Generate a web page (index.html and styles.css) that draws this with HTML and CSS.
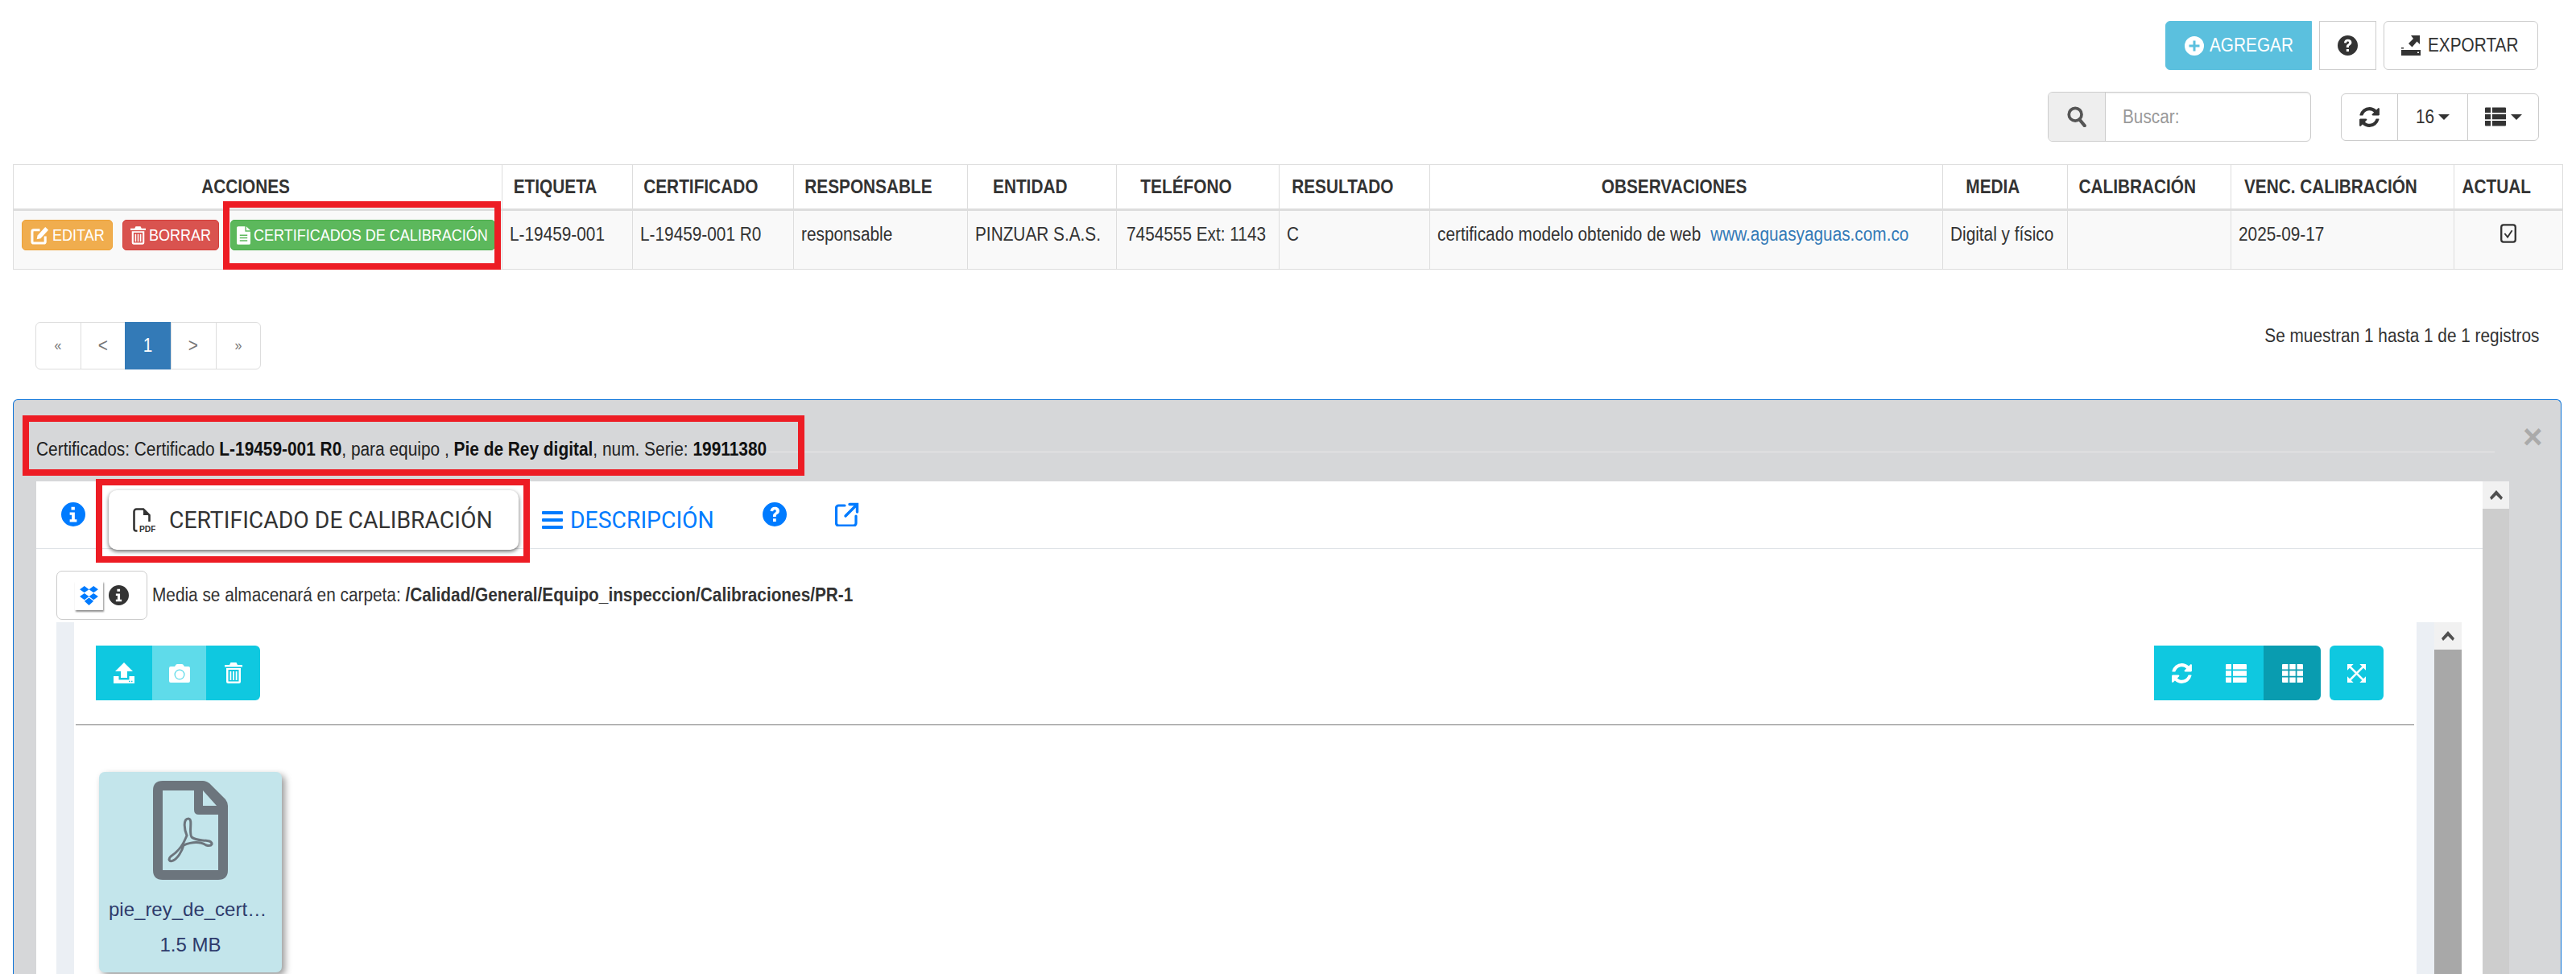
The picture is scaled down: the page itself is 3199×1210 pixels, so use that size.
FILE: index.html
```html
<!DOCTYPE html>
<html lang="es">
<head>
<meta charset="utf-8">
<title>Certificados de calibración</title>
<link rel="stylesheet" href="styles.css">
</head>
<body>
<svg class="defs" width="0" height="0" aria-hidden="true">
  <symbol id="i-refresh" viewBox="0 0 1792 1792"><path d="M1639 1056q0 5-1 7-64 268-268 434.5t-478 166.5q-146 0-282.5-55t-243.5-157l-129 129q-19 19-45 19t-45-19-19-45v-448q0-26 19-45t45-19h448q26 0 45 19t19 45-19 45l-137 137q71 66 161 102t187 36q134 0 250-65t186-179q11-17 53-117 8-23 30-23h192q13 0 22.5 9.5t9.5 22.5zm25-800v448q0 26-19 45t-45 19h-448q-26 0-45-19t-19-45 19-45l138-138q-148-137-349-137-134 0-250 65t-186 179q-11 17-53 117-8 23-30 23h-199q-13 0-22.5-9.5t-9.5-22.5v-7q65-268 270-434.5t480-166.5q146 0 284 55.5t245 156.5l130-129q19-19 45-19t45 19 19 45z"/></symbol>
  <symbol id="i-question" viewBox="0 0 24 24"><path fill-rule="evenodd" d="M12 0a12 12 0 1 0 0 24a12 12 0 0 0 0-24zM7.600 8.800C7.900 6 9.700 4.600 12.200 4.600c2.500 0 4.500 1.500 4.500 3.900 0 1.700-.9 2.600-2 3.300-1 .6-1.300 1-1.300 1.900v.6h-3v-.9c0-1.600.7-2.400 1.800-3.100.9-.6 1.300-1 1.300-1.700 0-.8-.6-1.300-1.400-1.300-.9 0-1.500.6-1.600 1.700zM10.400 16.200h3v3h-3z"/></symbol>
  <symbol id="i-info" viewBox="0 0 24 24"><path fill-rule="evenodd" d="M12 0a12 12 0 1 0 0 24a12 12 0 0 0 0-24zM10 4.500h3.500v3H10zM8.500 10h5v7h2v2.500h-7V17h2v-4.500h-2z"/></symbol>
  <symbol id="i-list" viewBox="0 0 26 23"><path d="M0 1a1 1 0 0 1 1-1h6v6.500H0zM9 0h16a1 1 0 0 1 1 1v5.500H9zM0 8.200h7v6.600H0zM9 8.200h17v6.600H9zM0 16.500h7V23H1a1 1 0 0 1-1-1zM9 16.500h17V22a1 1 0 0 1-1 1H9z"/></symbol>
  <symbol id="i-trash" viewBox="0 0 22 26"><path fill-rule="evenodd" d="M7.500 0h7l1.500 3h6v2.500H0V3h6zM2 7h18v16.500a2.500 2.500 0 0 1-2.500 2.500h-13A2.500 2.500 0 0 1 2 23.500zM4.500 9v14.500h13V9zM6.500 11h1.800v11H6.500zM10.100 11h1.800v11h-1.800zM13.700 11h1.800v11h-1.800z"/></symbol>
</svg>

<div class="toolbar-main">
  <button class="btn btn-info" type="button">
    <svg class="ic-24" viewBox="0 0 24 24"><path fill-rule="evenodd" d="M12 0a12 12 0 1 0 0 24a12 12 0 0 0 0-24zM10.500 5.500h3V10.500h5v3h-5v5h-3v-5h-5v-3h5z"/></svg>
    <span class="sq">AGREGAR</span>
  </button>
  <button class="btn btn-square" type="button"><svg class="ic-25"><use href="#i-question"/></svg></button>
  <button class="btn btn-default" type="button">
    <svg class="ic-export" viewBox="0 0 24 25"><path fill-rule="evenodd" d="M0 18h24v7H0zM20 20.500v1.500h2v-1.500zM0 15h3v1.500H0z"/><path d="M12 0h11v11l-3.500-3.500-6 7-4.500-4.500 6-6z"/></svg>
    <span class="sq">EXPORTAR</span>
  </button>
</div>

<div class="toolbar-search">
  <div class="search-group">
    <span class="search-addon">
      <svg class="ic-search" viewBox="0 0 26 28"><circle cx="11" cy="11" r="8.500" fill="none" stroke="#555" stroke-width="4"/><path d="M16.500 17.500l7 8.500" stroke="#555" stroke-width="4.500" stroke-linecap="round"/></svg>
    </span>
    <span class="search-input"><span class="sq">Buscar:</span></span>
  </div>
  <div class="tool-group">
    <span class="tool-cell tool-refresh"><svg class="ic-refresh-dark"><use href="#i-refresh"/></svg></span>
    <span class="tool-cell tool-size"><span class="sq">16</span><i class="caret"></i></span>
    <span class="tool-cell tool-view"><svg class="ic-list-dark"><use href="#i-list"/></svg><i class="caret"></i></span>
  </div>
</div>

<table class="data-table">
  <colgroup>
    <col class="c-acciones"><col class="c-etiqueta"><col class="c-certificado"><col class="c-responsable">
    <col class="c-entidad"><col class="c-telefono"><col class="c-resultado"><col class="c-observaciones">
    <col class="c-media"><col class="c-calibracion"><col class="c-venc"><col class="c-actual">
  </colgroup>
  <thead>
    <tr>
      <th><span class="sq-c">ACCIONES</span></th><th><span class="sq-c">ETIQUETA</span></th><th><span class="sq-c">CERTIFICADO</span></th><th><span class="sq-c">RESPONSABLE</span></th><th><span class="sq-c">ENTIDAD</span></th><th><span class="sq-c">TELÉFONO</span></th>
      <th><span class="sq-c">RESULTADO</span></th><th><span class="sq-c">OBSERVACIONES</span></th><th><span class="sq-c">MEDIA</span></th><th><span class="sq-c">CALIBRACIÓN</span></th><th><span class="sq-c">VENC. CALIBRACIÓN</span></th><th><span class="sq-c">ACTUAL</span></th>
    </tr>
  </thead>
  <tbody>
    <tr>
      <td class="cell-actions">
        <span class="act act-warning">
          <svg class="ic-edit" viewBox="0 0 24 24"><path d="M19 13v7a2 2 0 0 1-2 2H4a2 2 0 0 1-2-2V7a2 2 0 0 1 2-2h8" fill="none" stroke="#fff" stroke-width="3.200"/><path d="M9 12L19 1l4 4-10 11-5 1z" fill="#fff"/></svg><span class="sq-btn">EDITAR</span>
        </span>
        <span class="act act-danger"><svg class="ic-trash-sm"><use href="#i-trash"/></svg><span class="sq-btn">BORRAR</span></span>
        <span class="act act-success">
          <svg class="ic-file" viewBox="0 0 18 24"><path fill-rule="evenodd" d="M2 0h9v7h7v15a2 2 0 0 1-2 2H2a2 2 0 0 1-2-2V2a2 2 0 0 1 2-2zM12.500 0L18 5.500h-5.500zM4 11v1.600h10V11zM4 14.500v1.600h10v-1.600zM4 18v1.600h10V18z"/></svg><span class="sq-btn">CERTIFICADOS DE CALIBRACIÓN</span>
        </span>
      </td>
      <td><span class="sq">L-19459-001</span></td>
      <td><span class="sq">L-19459-001 R0</span></td>
      <td><span class="sq">responsable</span></td>
      <td><span class="sq">PINZUAR S.A.S.</span></td>
      <td class="cell-phone"><span class="sq">7454555 Ext: 1143</span></td>
      <td><span class="sq">C</span></td>
      <td><span class="sq">certificado modelo obtenido de web <a class="link" href="#">www.aguasyaguas.com.co</a></span></td>
      <td><span class="sq">Digital y físico</span></td>
      <td></td>
      <td><span class="sq">2025-09-17</span></td>
      <td class="cell-check">
        <svg class="ic-check" viewBox="0 0 22 26"><rect x="1.500" y="1.500" width="19" height="23" rx="3" fill="none" stroke="#333" stroke-width="2.500"/><path d="M6 13l4 5 6-9" fill="none" stroke="#333" stroke-width="2"/></svg>
      </td>
    </tr>
  </tbody>
</table>

<div class="table-footer">
  <ul class="pagination">
    <li class="pg pg-small"><span class="sq-c">«</span></li>
    <li class="pg"><span class="sq-c">&lt;</span></li>
    <li class="pg pg-active"><span class="sq-c">1</span></li>
    <li class="pg"><span class="sq-c">&gt;</span></li>
    <li class="pg pg-small"><span class="sq-c">»</span></li>
  </ul>
  <p class="records">Se muestran 1 hasta 1 de 1 registros</p>
</div>

<section class="panel">
  <header class="panel-head">
    <h2 class="panel-title">Certificados: Certificado <b>L-19459-001 R0</b>, para equipo , <b>Pie de Rey digital</b>, num. Serie: <b>19911380</b></h2>
    <span class="panel-close">×</span>
  </header>
  <div class="panel-body">
    <div class="panel-main">
      <nav class="tabs">
        <svg class="ic-tab ic-tab-info"><use href="#i-info"/></svg>
        <span class="tab tab-active">
          <svg class="ic-pdf-sm" viewBox="0 0 28 30"><path d="M1.500 26V4.500a3 3 0 0 1 3-3H13l7.500 7.500v8" fill="none" stroke="#333" stroke-width="2.600"/><path d="M13 1.500v7.500h7.500z" fill="#333"/><path d="M1.500 26a2.500 2.500 0 0 0 2.500 2.500h1.500" fill="none" stroke="#333" stroke-width="2.600"/><text x="8" y="29.500" class="pdf-label">PDF</text></svg>
          <span class="sq-tab">CERTIFICADO DE CALIBRACIÓN</span>
        </span>
        <span class="tab tab-link">
          <svg class="ic-bars" viewBox="0 0 26 22"><path d="M1 0h24a1 1 0 0 1 1 1v2a1 1 0 0 1-1 1H1a1 1 0 0 1-1-1V1a1 1 0 0 1 1-1zM1 9h24a1 1 0 0 1 1 1v2a1 1 0 0 1-1 1H1a1 1 0 0 1-1-1v-2a1 1 0 0 1 1-1zM1 18h24a1 1 0 0 1 1 1v2a1 1 0 0 1-1 1H1a1 1 0 0 1-1-1v-2a1 1 0 0 1 1-1z"/></svg>
          <span class="sq-tab">DESCRIPCIÓN</span>
        </span>
        <svg class="ic-tab ic-tab-help"><use href="#i-question"/></svg>
        <svg class="ic-tab ic-tab-ext" viewBox="0 0 30 30"><path d="M12 4H4.500a3 3 0 0 0-3 3v19a3 3 0 0 0 3 3H23a3 3 0 0 0 3-3v-9" fill="none" stroke="#007bff" stroke-width="3.200" stroke-linecap="round"/><path d="M13 17L27 3M18 2.500h9.500V12" fill="none" stroke="#007bff" stroke-width="3.400" stroke-linecap="round"/></svg>
      </nav>

      <div class="media-row">
        <span class="media-btn">
          <span class="dropbox-box">
            <svg class="ic-dropbox" viewBox="0 0 24 25"><path d="M6.500 1L12 5 6.500 9 1 5zM17.500 1L23 5l-5.500 4L12 5zM6.500 9.500L12 13.500 6.500 17.500 1 13.500zM17.500 9.500L23 13.500l-5.500 4L12 13.500zM12 15l5.500 4L12 24l-5.500-5z"/></svg>
          </span>
          <svg class="ic-media-info"><use href="#i-info"/></svg>
        </span>
        <span class="media-text sq">Media se almacenará en carpeta: <b>/Calidad/General/Equipo_inspeccion/Calibraciones/PR-1</b></span>
      </div>

      <div class="uploader">
        <div class="track-left"></div>
        <div class="uploader-main">
          <div class="up-tools">
            <div class="up-group">
              <span class="up-btn up-upload"><svg class="ic-up" viewBox="0 0 26 26"><path d="M13 0l11 11h-7v8H9v-8H2z"/><path fill-rule="evenodd" d="M0 17h6.500v4.500h13V17H26v9H0zM19 22.800v1.400h1.500v-1.400zM22 22.800v1.400h1.500v-1.400z"/></svg></span>
              <span class="up-btn up-camera"><svg class="ic-cam" viewBox="0 0 26 23"><path fill-rule="evenodd" d="M8 1.500Q8.500 0 10 0h6q1.500 0 2 1.500L19 3h5a2 2 0 0 1 2 2v16a2 2 0 0 1-2 2H2a2 2 0 0 1-2-2V5a2 2 0 0 1 2-2h5zM13 6.500a6.500 6.500 0 1 0 0 13a6.500 6.500 0 0 0 0-13zM13 7.800a5.200 5.200 0 1 1 0 10.400a5.200 5.200 0 0 1 0-10.400z"/></svg></span>
              <span class="up-btn up-trash"><svg class="ic-trash-lg"><use href="#i-trash"/></svg></span>
            </div>
            <div class="up-right">
              <div class="up-group up-views">
                <span class="view-btn"><svg class="ic-refresh-lt"><use href="#i-refresh"/></svg></span>
                <span class="view-btn"><svg class="ic-list-lt"><use href="#i-list"/></svg></span>
                <span class="view-btn view-active">
                  <svg class="ic-list-lt" viewBox="0 0 26 23"><path d="M0 1a1 1 0 0 1 1-1h6.500v6.500H0zM9.300 0h7.400v6.500H9.300zM18.500 0H25a1 1 0 0 1 1 1v5.500h-7.500zM0 8.200h7.500v6.600H0zM9.300 8.200h7.400v6.600H9.300zM18.500 8.200H26v6.600h-7.500zM0 16.500h7.500V23H1a1 1 0 0 1-1-1zM9.300 16.500h7.400V23H9.300zM18.500 16.500H26V22a1 1 0 0 1-1 1h-6.500z"/></svg>
                </span>
              </div>
              <span class="expand-btn">
                <svg class="ic-expand" viewBox="0 0 24 24"><path d="M0 0h8L0 8zM24 0v8L16 0zM0 24v-8l8 8zM24 24h-8l8-8z"/><path d="M3 3L21 21M21 3L3 21" stroke="#fff" stroke-width="2.800" fill="none"/></svg>
              </span>
            </div>
          </div>
          <hr class="up-rule">
          <article class="file-card">
            <svg class="ic-pdf-big" viewBox="0 0 93 124">
              <path fill-rule="evenodd" fill="#6c757d" d="M12 0H62Q66 0 70 3L90 23Q93 27 93 31V111Q93 123 81 123H12Q0 123 0 111V12Q0 0 12 0ZM12 12V111H81V42H57Q51 42 51 36V12ZM62 12L79 31H62Z"/>
              <path fill="none" stroke="#6c757d" stroke-width="3" d="M44 47C38 47 38 58 42 68C36 84 28 90 22 94C18 98 21 101 25 99C30 97 36 88 38 80C48 76 58 75 66 80C74 82 75 77 70 75C62 73 54 75 48 70C44 64 50 47 44 47Z"/>
            </svg>
            <div class="file-name">pie_rey_de_certificado.pdf</div>
            <div class="file-size">1.5 MB</div>
          </article>
        </div>
        <div class="track-right"></div>
        <div class="scroll-inner"><span class="scroll-up"><svg class="ic-chev" viewBox="0 0 16 12"><path d="M8 0l8 9-2 3-6-6-6 6-2-3z"/></svg></span></div>
      </div>
    </div>
    <div class="scroll-outer"><span class="scroll-up scroll-up-outer"><svg class="ic-chev" viewBox="0 0 16 12"><path d="M8 0l8 9-2 3-6-6-6 6-2-3z"/></svg></span></div>
  </div>
</section>

<div class="mark mark-cert"></div>
<div class="mark mark-title"></div>
<div class="mark mark-tab"></div>
</body>
</html>
```

FILE: styles.css
```css
* { box-sizing: border-box; }
html, body { margin: 0; height: 1210px; overflow: hidden; background: #fff; }
body {
  position: relative;
  font-family: "Liberation Sans", Arial, sans-serif;
  font-size: 23.500px;
  color: #333;
}
.defs { position: absolute; }
svg { display: block; flex: none; fill: currentColor; }

/* the reference's text is tall and tight: same face, squeezed horizontally */
.sq, .sq-c, .sq-btn, .sq-tab { display: inline-block; flex: none; white-space: nowrap; transform-origin: 0 50%; transform: scaleX(.885); }
.sq-c { transform-origin: 50% 50%; }
.sq-btn { transform: scaleX(.857); }
.sq-tab { transform: scaleX(.96); }

/* top toolbars */
.toolbar-main { display: flex; justify-content: flex-end; gap: 9px; padding: 26px 47px 0 0; }
.btn {
  display: flex; align-items: center;
  height: 61px; padding: 0; font: inherit; color: #333;
  background: #fff; border: 1px solid #ccc;
}
.btn-info { width: 182px; padding-left: 23px; gap: 7px; color: #fff; background: #5bc0de; border-color: #5bc0de; border-radius: 6px 0 0 6px; }
.btn-square { width: 71px; justify-content: center; }
.btn-default { width: 192px; padding-left: 21px; gap: 9px; border-radius: 6px; }
.ic-24 { width: 24px; height: 24px; }
.ic-25 { width: 25px; height: 25px; }
.ic-export { width: 24px; height: 25px; }

.toolbar-search { display: flex; justify-content: flex-end; align-items: center; gap: 37px; padding: 27px 46px 0 0; }
.search-group { display: flex; width: 327px; height: 62px; border: 1px solid #ccc; border-radius: 6px; overflow: hidden; box-shadow: inset 0 1px 2px rgba(0,0,0,.08); }
.search-addon { display: flex; align-items: center; justify-content: center; width: 71px; background: #eee; border-right: 1px solid #ccc; }
.ic-search { width: 26px; height: 26px; }
.search-input { display: flex; align-items: center; padding-left: 21px; color: #999; }
.tool-group { display: flex; width: 246px; height: 59px; border: 1px solid #ccc; border-radius: 6px; }
.tool-cell { display: flex; align-items: center; justify-content: center; border-left: 1px solid #ccc; }
.tool-refresh { width: 69px; border-left: 0; }
.tool-size { width: 87px; justify-content: flex-start; padding-left: 22px; gap: 2px; }
.tool-view { flex: 1; gap: 6px; }
.ic-refresh-dark { width: 29px; height: 29px; }
.ic-list-dark { width: 26px; height: 24px; }
.caret { display: block; width: 0; height: 0; border-left: 7px solid transparent; border-right: 7px solid transparent; border-top: 7px solid #333; }

/* table */
.data-table { width: 3166px; margin: 28px 0 0 16px; table-layout: fixed; border-collapse: collapse; }
.c-acciones { width: 607px; } .c-etiqueta { width: 162px; } .c-certificado { width: 200px; }
.c-responsable { width: 216px; } .c-entidad { width: 185px; } .c-telefono { width: 202px; }
.c-resultado { width: 187px; } .c-observaciones { width: 637px; } .c-media { width: 155px; }
.c-calibracion { width: 203px; } .c-venc { width: 277px; } .c-actual { width: 135px; }
.data-table th {
  height: 56px; padding: 0 30px 0 0; text-align: center; font-weight: 700; white-space: nowrap;
  border: 1px solid #ddd; border-bottom: 3px solid #ddd;
}
.data-table td {
  height: 74px; padding: 14px 9px 0; vertical-align: top; line-height: 30px; white-space: nowrap;
  background: #f9f9f9; border: 1px solid #ddd;
}
.data-table td.cell-phone { padding-left: 12px; }
.data-table td.cell-actions { padding: 11px 0 0 10px; font-size: 21px; }
.act { float: left; display: flex; align-items: center; height: 38px; color: #fff; border-radius: 5px; border: 1px solid transparent; }
.act-warning { width: 113px; padding-left: 10px; gap: 4px; background: #f0ad4e; border-color: #eea236; }
.act-danger { width: 120px; margin-left: 12px; padding-left: 9px; gap: 4px; background: #d9534f; border-color: #d43f3a; }
.act-success { width: 329px; margin-left: 14px; padding-left: 7px; gap: 4px; background: #5cb85c; border-color: #4cae4c; }
.ic-edit { width: 23px; height: 23px; }
.ic-trash-sm { width: 19px; height: 23px; }
.ic-file { width: 17px; height: 23px; color: #fff; }
.link { color: #337ab7; text-decoration: none; margin-left: 7px; }
.data-table td.cell-check { padding: 16px 0 0; }
.ic-check { width: 22px; height: 24px; margin: 0 auto; }

/* footer */
.table-footer { display: flex; justify-content: space-between; padding: 65px 46px 0 44px; height: 161px; }
.pagination { display: flex; height: 59px; margin: 0; padding: 0; list-style: none; border: 1px solid #ddd; border-radius: 6px; width: 280px; }
.pg { display: flex; align-items: center; justify-content: center; flex: 1; color: #777; border-left: 1px solid #ddd; }
.pg:first-child { border-left: 0; }
.pg-small { font-size: 18px; }
.pg-active { flex: none; width: 57px; margin: -1px 0; color: #fff; background: #337ab7; border-left: 0; }
.records { margin: 2px 0 0; line-height: 30px; white-space: nowrap; transform: scaleX(.885); transform-origin: 100% 50%; }

/* panel */
.panel { height: 900px; margin: 0 18px 0 16px; display: flex; flex-direction: column; background: #d6d7d9; border: 1px solid #0a72d8; border-bottom: 0; border-radius: 6px 6px 0 0; position: relative; }
.panel-head { height: 101px; flex: none; padding: 46px 0 0 28px; }
.panel-head::after { content: ""; position: absolute; left: 937px; width: 2144px; top: 64px; height: 1px; background: #e8e8e8; }
.panel-title { margin: 0; font-size: 23.500px; font-weight: 400; line-height: 30px; color: #222; white-space: nowrap; transform: scaleX(.888); transform-origin: 0 50%; }
.panel-title b { color: #111; }
.panel-close { position: absolute; left: 3116px; top: 21px; font: 700 42px/50px "Liberation Sans", sans-serif; color: #aaa; }
.panel-body { display: flex; flex: 1; margin: 0 64px 0 28px; background: #fff; }
.panel-main { flex: 1; min-width: 0; }
.scroll-outer { width: 33px; background: #cdcdcd; }
.scroll-up { display: flex; align-items: center; justify-content: center; height: 34px; background: #f1f1f1; }
.ic-chev { width: 16px; height: 12px; color: #505050; }

/* tabs */
.tabs { position: relative; height: 84px; border-bottom: 1px solid #dee2e6; display: flex; align-items: flex-start; }
.ic-tab { width: 30px; height: 30px; color: #007bff; margin-top: 26px; }
.ic-tab-info { margin-left: 31px; }
.tab { display: flex; align-items: center; font-family: Roboto, "Liberation Sans", sans-serif; font-size: 29.500px; }
.tab-active { width: 509px; height: 74px; margin: 11px 0 0 29px; padding-left: 30px; gap: 17px; background: #fff; border-radius: 10px; box-shadow: 0 2px 5px rgba(0,0,0,.6); }
.ic-pdf-sm { width: 28px; height: 30px; }
.pdf-label { font: 700 10.300px "Liberation Sans", sans-serif; fill: #333; }
.tab-link { margin: 25px 0 0 29px; height: 46px; gap: 9px; color: #007bff; }
.ic-bars { width: 26px; height: 22px; }
.ic-tab-help { margin-left: 53px; }
.ic-tab-ext { margin-left: 60px; }

.media-row { display: flex; align-items: center; gap: 6px; height: 61px; margin: 27px 0 0 25px; }
.media-btn { display: flex; align-items: center; gap: 7px; width: 113px; height: 61px; padding-left: 22px; border: 1px solid #ccc; border-radius: 7px; }
.dropbox-box { display: flex; align-items: center; justify-content: center; width: 35px; height: 36px; background: #fff; box-shadow: 1px 2px 2px rgba(0,0,0,.45); }
.ic-dropbox { width: 25px; height: 26px; color: #007bff; }
.ic-media-info { width: 25px; height: 25px; color: #333; }
.media-text { color: #333; }

/* uploader */
.uploader { display: flex; height: 600px; margin: 3px 26px 0 25px; }
.track-left { width: 22px; background: #ebeff4; }
.uploader-main { flex: 1; min-width: 0; background: #fff; }
.track-right { width: 22px; background: #ebeff4; }
.scroll-inner { width: 34px; background: #a8a8a8; }
.up-tools { display: flex; justify-content: space-between; padding: 29px 41px 0 27px; }
.up-group { display: flex; height: 68px; overflow: hidden; }
.up-group:first-child { border-radius: 0 6px 6px 0; }
.up-btn, .view-btn, .expand-btn { display: flex; align-items: center; justify-content: center; color: #fff; background: #0fc8e0; }
.up-btn { width: 67px; }
.up-upload { width: 70px; }
.up-camera { background: #5fdbea; }
.ic-up { width: 26px; height: 26px; }
.ic-cam { width: 26px; height: 23px; }
.ic-trash-lg { width: 22px; height: 26px; }
.ic-refresh-lt { width: 29px; height: 29px; }
.ic-list-lt { width: 26px; height: 23px; }
.ic-expand { width: 23px; height: 23px; }
.up-right { display: flex; gap: 11px; }
.up-views { border-radius: 6px; }
.view-btn { width: 68px; }
.view-active { width: 71px; background: #099cb0; }
.expand-btn { width: 67px; height: 68px; border-radius: 6px; }
.up-rule { height: 1px; margin: 30px 3px 0 2px; border: 0; background: #777; }
.file-card { width: 227px; height: 249px; margin: 58px 0 0 31px; padding-top: 11px; background: #c3e5eb; border-radius: 7px; box-shadow: 4px 4px 8px rgba(0,0,0,.4); color: #2e3b6b; font-family: "Liberation Sans", sans-serif; font-size: 24px; text-align: center; }
.ic-pdf-big { width: 93px; height: 124px; margin: 0 auto; }
.file-name { margin: 21px 15px 0 12px; line-height: 30px; overflow: hidden; white-space: nowrap; text-overflow: ellipsis; }
.file-size { margin-top: 14px; line-height: 30px; }

/* red annotation boxes */
.mark { position: absolute; border: 8px solid #ed1c24; pointer-events: none; }
.mark-cert { left: 277px; top: 250px; width: 345px; height: 85px; }
.mark-title { left: 28px; top: 516px; width: 971px; height: 75px; }
.mark-tab { left: 119px; top: 595px; width: 539px; height: 104px; }
```
